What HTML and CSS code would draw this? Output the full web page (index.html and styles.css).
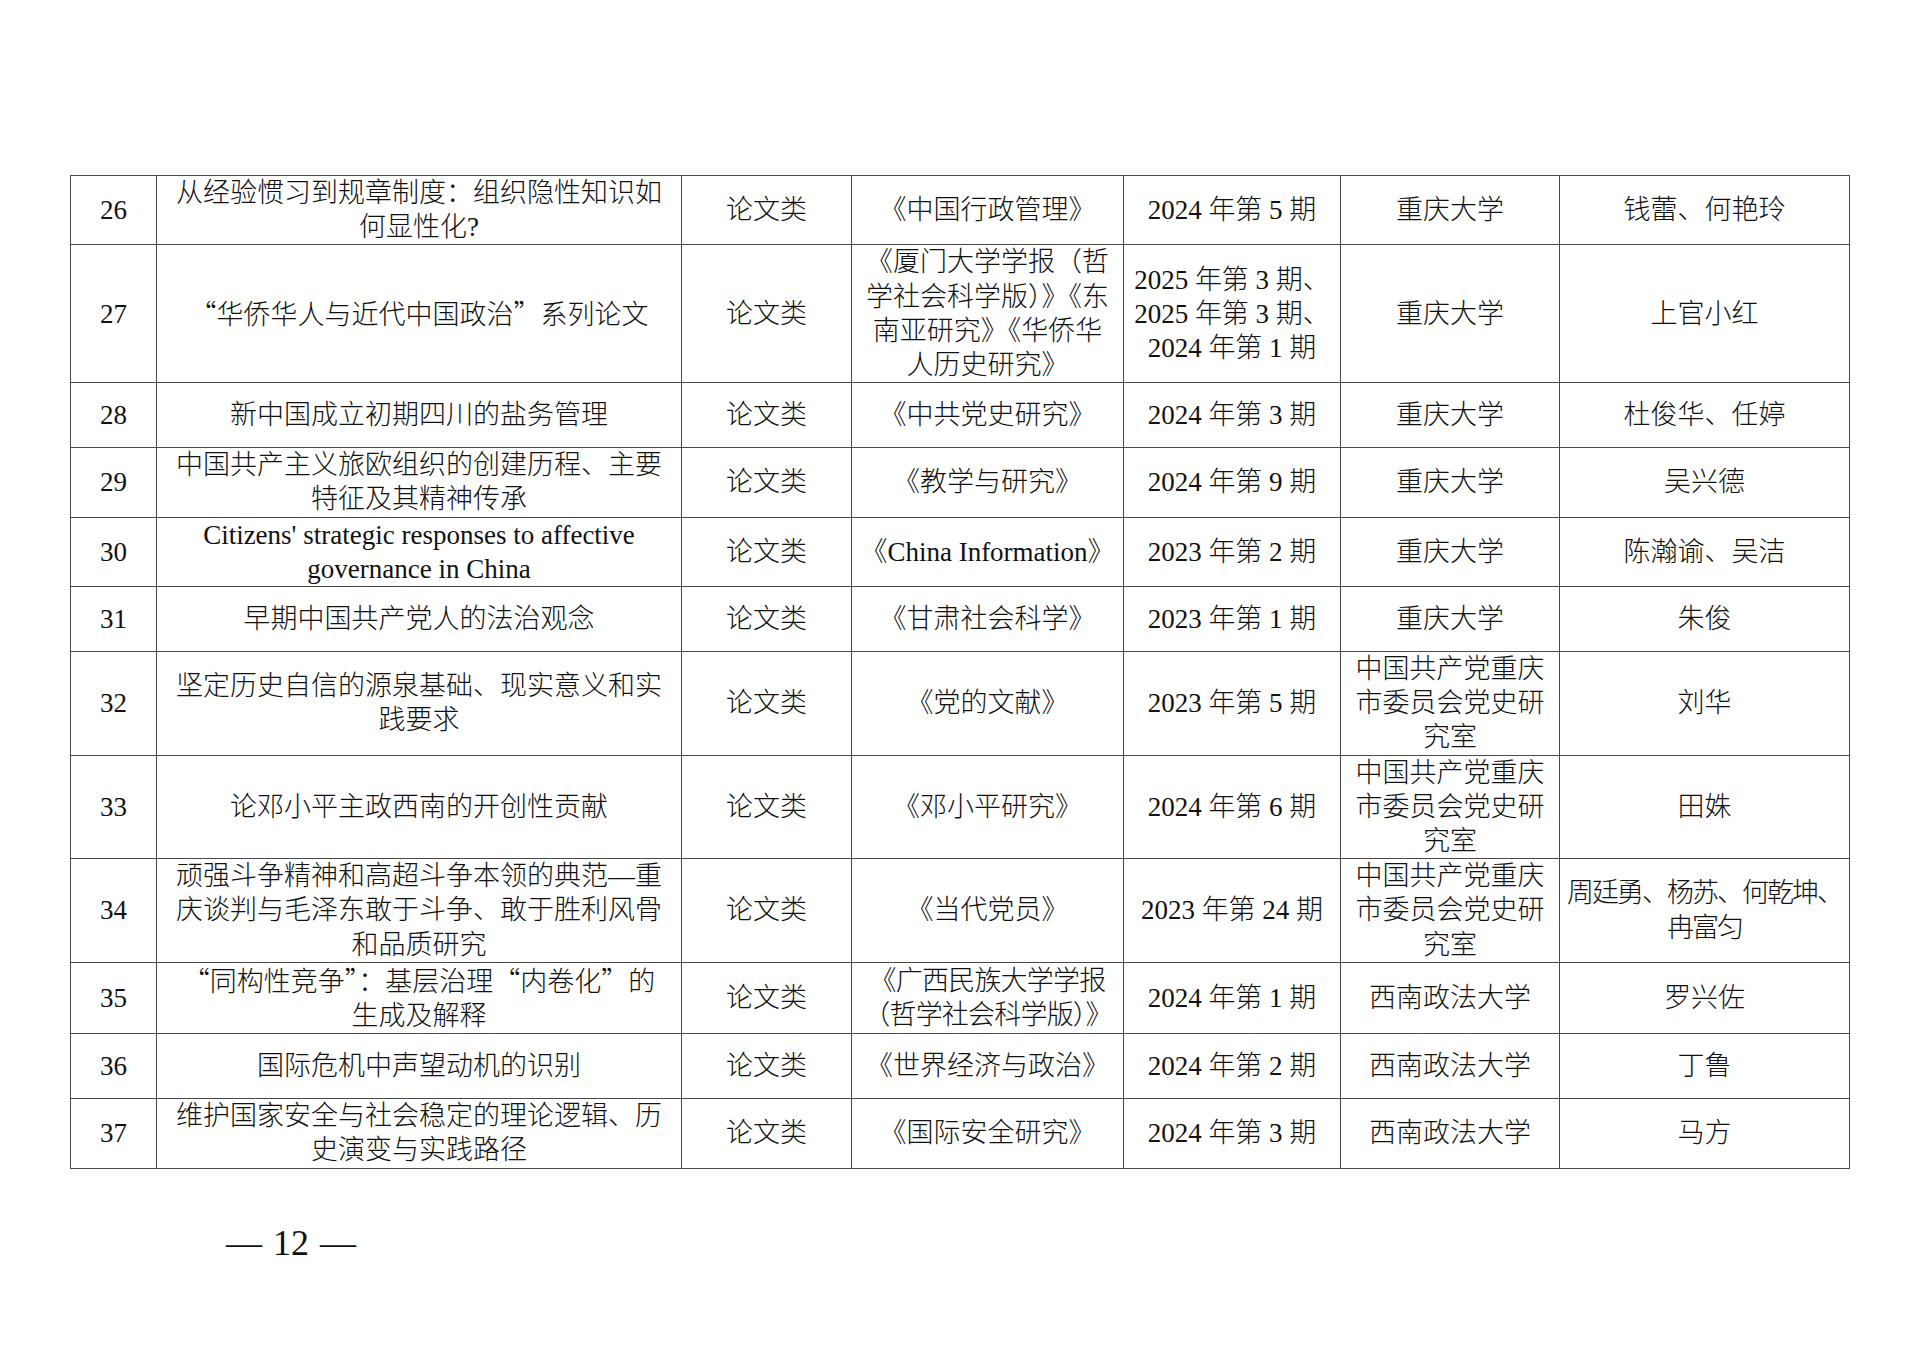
FILE: index.html
```html
<!DOCTYPE html>
<html lang="zh-CN">
<head>
<meta charset="utf-8">
<title>论文类成果</title>
<link rel="stylesheet" href="styles.css">
</head>
<body>
<div class="page">
  <table class="list">
    <colgroup>
      <col class="c-no"><col class="c-title"><col class="c-type"><col class="c-journal"><col class="c-date"><col class="c-unit"><col class="c-author">
    </colgroup>
    <tbody>
      <tr class="row">
        <td>26</td>
        <td>从经验惯习到规章制度：组织隐性知识如<br>何显性化?</td>
        <td>论文类</td>
        <td>《中国行政管理》</td>
        <td>2024 年第 5 期</td>
        <td>重庆大学</td>
        <td>钱蕾、何艳玲</td>
      </tr>
      <tr class="row">
        <td>27</td>
        <td><span class="q">“</span>华侨华人与近代中国政治<span class="q">”</span>系列论文</td>
        <td>论文类</td>
        <td>《厦门大学学报（哲<br>学社会科学版）》《东<br>南亚研究》《华侨华<br>人历史研究》</td>
        <td>2025 年第 3 期、<br>2025 年第 3 期、<br>2024 年第 1 期</td>
        <td>重庆大学</td>
        <td>上官小红</td>
      </tr>
      <tr class="row">
        <td>28</td>
        <td>新中国成立初期四川的盐务管理</td>
        <td>论文类</td>
        <td>《中共党史研究》</td>
        <td>2024 年第 3 期</td>
        <td>重庆大学</td>
        <td>杜俊华、任婷</td>
      </tr>
      <tr class="row">
        <td>29</td>
        <td>中国共产主义旅欧组织的创建历程、主要<br>特征及其精神传承</td>
        <td>论文类</td>
        <td>《教学与研究》</td>
        <td>2024 年第 9 期</td>
        <td>重庆大学</td>
        <td>吴兴德</td>
      </tr>
      <tr class="row">
        <td>30</td>
        <td>Citizens' strategic responses to affective<br>governance in China</td>
        <td>论文类</td>
        <td>《China Information》</td>
        <td>2023 年第 2 期</td>
        <td>重庆大学</td>
        <td>陈瀚谕、吴洁</td>
      </tr>
      <tr class="row">
        <td>31</td>
        <td>早期中国共产党人的法治观念</td>
        <td>论文类</td>
        <td>《甘肃社会科学》</td>
        <td>2023 年第 1 期</td>
        <td>重庆大学</td>
        <td>朱俊</td>
      </tr>
      <tr class="row">
        <td>32</td>
        <td>坚定历史自信的源泉基础、现实意义和实<br>践要求</td>
        <td>论文类</td>
        <td>《党的文献》</td>
        <td>2023 年第 5 期</td>
        <td>中国共产党重庆<br>市委员会党史研<br>究室</td>
        <td>刘华</td>
      </tr>
      <tr class="row">
        <td>33</td>
        <td>论邓小平主政西南的开创性贡献</td>
        <td>论文类</td>
        <td>《邓小平研究》</td>
        <td>2024 年第 6 期</td>
        <td>中国共产党重庆<br>市委员会党史研<br>究室</td>
        <td>田姝</td>
      </tr>
      <tr class="row">
        <td>34</td>
        <td>顽强斗争精神和高超斗争本领的典范—重<br>庆谈判与毛泽东敢于斗争、敢于胜利风骨<br>和品质研究</td>
        <td>论文类</td>
        <td>《当代党员》</td>
        <td>2023 年第 24 期</td>
        <td>中国共产党重庆<br>市委员会党史研<br>究室</td>
        <td class="tight">周廷勇、杨苏、何乾坤、<br>冉富匀</td>
      </tr>
      <tr class="row">
        <td>35</td>
        <td><span class="q">“</span>同构性竞争<span class="q">”</span>：基层治理<span class="q">“</span>内卷化<span class="q">”</span>的<br>生成及解释</td>
        <td>论文类</td>
        <td class="snug">《广西民族大学学报<br>（哲学社会科学版）》</td>
        <td>2024 年第 1 期</td>
        <td>西南政法大学</td>
        <td>罗兴佐</td>
      </tr>
      <tr class="row">
        <td>36</td>
        <td>国际危机中声望动机的识别</td>
        <td>论文类</td>
        <td>《世界经济与政治》</td>
        <td>2024 年第 2 期</td>
        <td>西南政法大学</td>
        <td>丁鲁</td>
      </tr>
      <tr class="row">
        <td>37</td>
        <td>维护国家安全与社会稳定的理论逻辑、历<br>史演变与实践路径</td>
        <td>论文类</td>
        <td>《国际安全研究》</td>
        <td>2024 年第 3 期</td>
        <td>西南政法大学</td>
        <td>马方</td>
      </tr>
    </tbody>
  </table>
  <div class="folio">— 12 —</div>
</div>
</body>
</html>
```

FILE: styles.css
```css
html, body {
  margin: 0;
  padding: 0;
  background: #ffffff;
}

body {
  font-family: "Liberation Serif", "Noto Sans CJK SC", serif;
  color: #111111;
}

.page {
  width: 1920px;
  height: 1357px;
  box-sizing: border-box;
  padding: 175px 0 0 70px;
}

.list {
  width: 1779px;
  border-collapse: collapse;
  table-layout: fixed;
  font-size: 27px;
  line-height: 34.2px;
}

.c-no { width: 86px; }
.c-title { width: 525px; }
.c-type { width: 170px; }
.c-journal { width: 272px; }
.c-date { width: 217px; }
.c-unit { width: 219px; }
.c-author { width: 290px; }

.row {
  height: 65px;
}

.list td {
  border: 1.3px solid #4a4a4a;
  padding: 0 4px;
  text-align: center;
  vertical-align: middle;
  white-space: nowrap;
  font-weight: 300;
}

.list td.tight {
  letter-spacing: -2px;
}

.list td.snug {
  letter-spacing: -0.8px;
}

.q {
  font-family: "Noto Sans CJK SC", sans-serif;
}

.folio {
  margin-top: 54px;
  padding-left: 156px;
  font-size: 36px;
  line-height: 41px;
  word-spacing: 2px;
}
```
